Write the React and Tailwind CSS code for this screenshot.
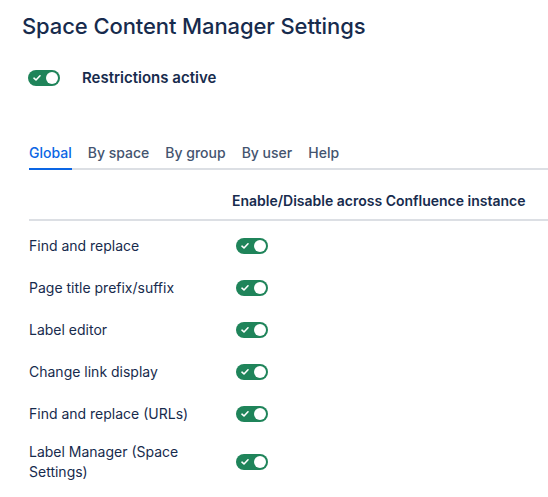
import React from 'react'

const features = [
    'Find and replace',
    'Page title prefix/suffix',
    'Label editor',
    'Change link display',
    'Find and replace (URLs)',
    'Label Manager (Space Settings)',
]

const tabs = ['Global', 'By space', 'By group', 'By user', 'Help']

const Toggle = () => (
    <div className="relative w-8 h-4 rounded-full bg-[#1f845a] shrink-0">
        <svg className="absolute left-[5px] top-[4px]" width="8" height="8" viewBox="0 0 8 8" fill="none">
            <path d="M1 4.2 L3 6 L7 1.8" stroke="white" strokeWidth="1.6" strokeLinecap="round" strokeLinejoin="round" />
        </svg>
        <span className="absolute right-[2px] top-[2px] w-3 h-3 rounded-full bg-white" />
    </div>
)

export default function App() {
    return (
        <div className="w-[548px] h-[497px] overflow-hidden bg-white text-[#172b4d]" style={{ fontFamily: 'Inter, "Noto Sans", sans-serif' }}>
            <h1 className="pl-[22px] pt-[12px] text-[22px] leading-[28px] font-medium tracking-[-0.1px]">Space Content Manager Settings</h1>

            <div className="flex items-center pl-[28px] mt-[30px] h-[16px]">
                <Toggle />
                <span className="ml-[22px] text-[15px] font-semibold">Restrictions active</span>
            </div>

            {/* Tabs */}
            <div className="ml-[29px] mt-[56px] flex gap-4 border-b-2 border-[#dcdfe4] text-[14px] font-medium text-[#44546f]">
                {tabs.map((t, i) => (
                    <div
                        key={t}
                        className={i === 0
                            ? 'pb-[5px] -mb-[2px] border-b-2 border-[#0c66e4] text-[#0c66e4]'
                            : 'pb-[5px]'}
                    >
                        {t}
                    </div>
                ))}
            </div>

            <div className="ml-[29px]">
                <div className="flex items-end h-[51px] pb-[8px] border-b-2 border-[#dcdfe4]">
                    <div className="w-[203px]" />
                    <div className="text-[14px] font-semibold">Enable/Disable across Confluence instance</div>
                </div>

                <div className="pt-[4px]">
                    {features.map((f) => (
                        <div key={f} className="flex items-center min-h-[42px] text-[14px] leading-[20px]">
                            <div className="w-[207px] pr-4 py-[7px]">{f}</div>
                            <Toggle />
                        </div>
                    ))}
                </div>
            </div>
        </div>
    )
}
